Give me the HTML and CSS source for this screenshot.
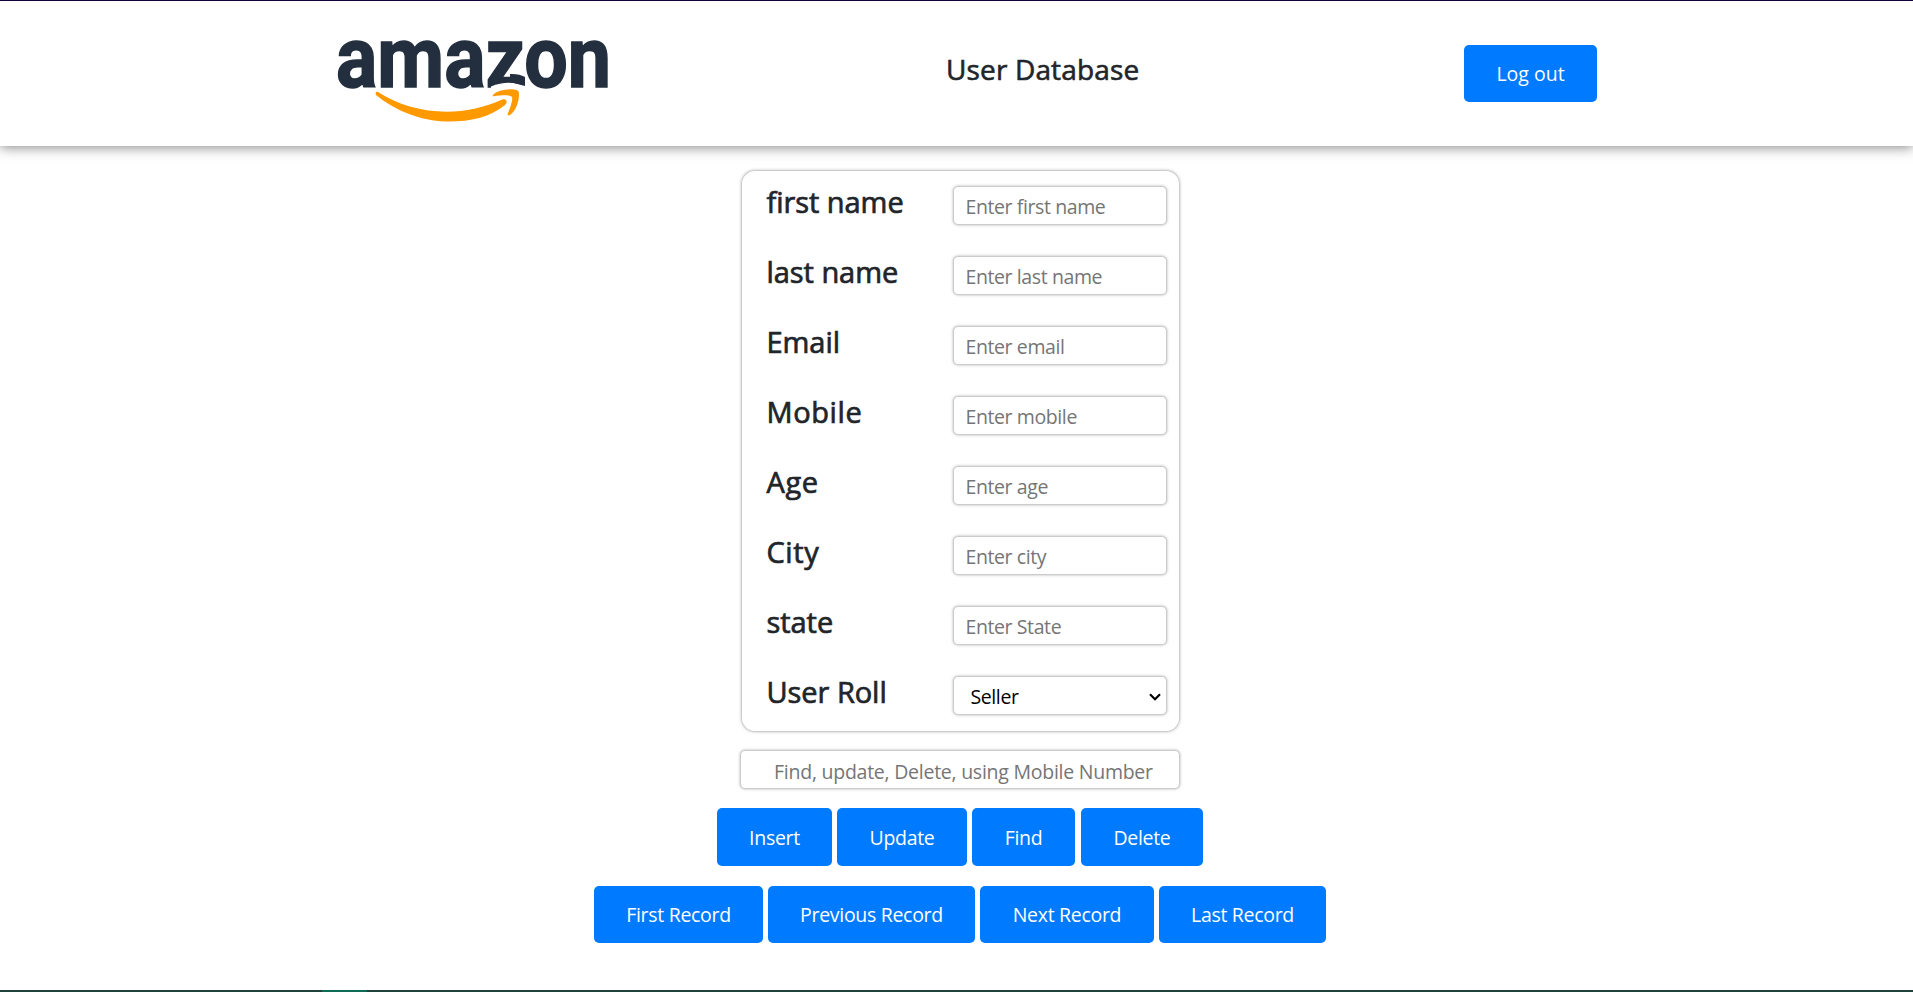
FILE: index.html
```
<!DOCTYPE html>
<html lang="en">
<head>
<meta charset="utf-8">
<title>User Database</title>
<link rel="stylesheet" href="styles.css">
</head>
<body>
<header class="header">
  <svg class="logo" width="310" height="120" viewBox="0 0 310 120" role="img" aria-label="amazon">
    <text class="logo-text" x="16" y="67" textLength="275" lengthAdjust="spacingAndGlyphs">amazon</text>
    <path d="M171 66.500Q189 59 206 66.500V70H171Z" fill="#fff"/>
    <path d="M190 54Q199 53.500 205 57V66L190 62Z" fill="#232f3e"/>
    <path d="M58 72C93 95 142 98 181 80C185 78 189 81 185 85C169 98 148 102 126 101.500C99 101 73 89 56 75C55 73 56 71 58 72Z" fill="#ff9900"/>
    <path d="M173 75C177 70 190 68 197 70Q199 71 199 74C199 81 196 91 190 95C188 96 187 95 188 93C191 86 193 79 192 77C190 75 181 75 175 76Q172 77 173 75Z" fill="#ff9900"/>
  </svg>
  <h1 class="title">User Database</h1>
  <button class="btn logout">Log out</button>
</header>
<main class="main">
  <form class="card">
    <div class="row"><label class="label">first name</label><input class="field" placeholder="Enter first name"></div>
    <div class="row"><label class="label">last name</label><input class="field" placeholder="Enter last name"></div>
    <div class="row"><label class="label">Email</label><input class="field" placeholder="Enter email"></div>
    <div class="row"><label class="label wide">Mobile</label><input class="field" placeholder="Enter mobile"></div>
    <div class="row"><label class="label wide">Age</label><input class="field" placeholder="Enter age"></div>
    <div class="row"><label class="label wide">City</label><input class="field" placeholder="Enter city"></div>
    <div class="row"><label class="label">state</label><input class="field" placeholder="Enter State"></div>
    <div class="row"><label class="label">User Roll</label>
      <div class="field select"><span>Seller</span><svg width="12" height="8" viewBox="0 0 12 8"><path d="M1 1.200L6 6.200L11 1.200" fill="none" stroke="#000" stroke-width="2.200"/></svg></div>
    </div>
  </form>
  <input class="field search" placeholder="Find, update, Delete, using Mobile Number">
  <div class="actions primary">
    <button class="btn insert">Insert</button><button class="btn update">Update</button><button class="btn find">Find</button><button class="btn delete">Delete</button>
  </div>
  <div class="actions">
    <button class="btn first">First Record</button><button class="btn previous">Previous Record</button><button class="btn next">Next Record</button><button class="btn last">Last Record</button>
  </div>
</main>
<footer class="edge"><div class="edge-mark"></div></footer>
</body>
</html>
```
FILE: styles.css
```
* { box-sizing: border-box; }
body {
  margin: 0;
  height: 992px;
  display: flex;
  flex-direction: column;
  overflow: hidden;
  background: #fff;
  color: #212529;
  font-family: "Open Sans", "Noto Sans", sans-serif;
  border-top: 1px solid #120338;
}
.header {
  height: 145px;
  flex: none;
  display: flex;
  align-items: flex-start;
  padding: 19px 0 0 320px;
  box-shadow: 0 1px 12px rgba(0, 0, 0, .5);
}
.logo { flex: none; }
.logo-text { font: 700 85px Roboto, sans-serif; fill: #232f3e; stroke: #232f3e; stroke-width: 1.5px; }
.title {
  width: 517px;
  margin: 29px 0 0 316px;
  font-size: 28px;
  line-height: 40px;
  font-weight: 400;
  letter-spacing: .15px;
  -webkit-text-stroke: .6px #212529;
}
.btn {
  height: 57px;
  padding: 0;
  border: 0;
  border-radius: 5px;
  background: #007bff;
  color: #fff;
  font: 400 19.5px/57px "Open Sans", "Noto Sans", sans-serif;
  letter-spacing: -.3px;
  white-space: nowrap;
}
.logout { width: 133px; margin-top: 25px; margin-left: 1px; letter-spacing: 0; }
.main {
  flex: 1;
  display: flex;
  flex-direction: column;
  align-items: center;
  padding: 24px 0 0 7px;
}
.card {
  width: 439px;
  height: 562px;
  padding: 16px 13px 0 26px;
  border-radius: 14px;
  box-shadow: inset 0 0 0 1px #ccc, 0 0 3px rgba(0, 0, 0, .25);
}
.row {
  height: 70px;
  display: flex;
  justify-content: space-between;
  align-items: flex-start;
}
.label {
  margin-top: -1px;
  font-size: 29px;
  line-height: 34px;
  font-weight: 400;
  letter-spacing: -.05px;
  -webkit-text-stroke: .7px #212529;
}
.wide { letter-spacing: .6px; }
.field {
  width: 214px;
  height: 39px;
  padding: 2px 12px 0;
  border: 1px solid #ccc;
  border-radius: 5px;
  background: #fff;
  box-shadow: 0 0 3px rgba(0, 0, 0, .3);
  color: #000;
  font: 400 19.5px/30px "Open Sans", "Noto Sans", sans-serif;
  letter-spacing: -.4px;
}
.field::placeholder { color: #757575; opacity: 1; }
.select {
  display: flex;
  align-items: center;
  justify-content: space-between;
  padding: 2px 5px 0 17px;
}
.search { width: 440px; margin-top: 18px; padding: 3px 10px 0 33px; letter-spacing: -.25px; }
.actions { display: flex; gap: 5px; margin-top: 20px; }
.primary { margin-top: 19px; }
.primary .btn { height: 58px; }
.insert { width: 115px; }
.update { width: 130px; }
.find { width: 103px; }
.delete { width: 122px; margin-left: 1px; }
.first { width: 169px; }
.previous { width: 207px; }
.next { width: 174px; }
.last { width: 167px; }
.edge { height: 2px; flex: none; padding-left: 322px; background: #20413a; }
.edge-mark { width: 45px; height: 2px; background: #0d6b56; }
```
